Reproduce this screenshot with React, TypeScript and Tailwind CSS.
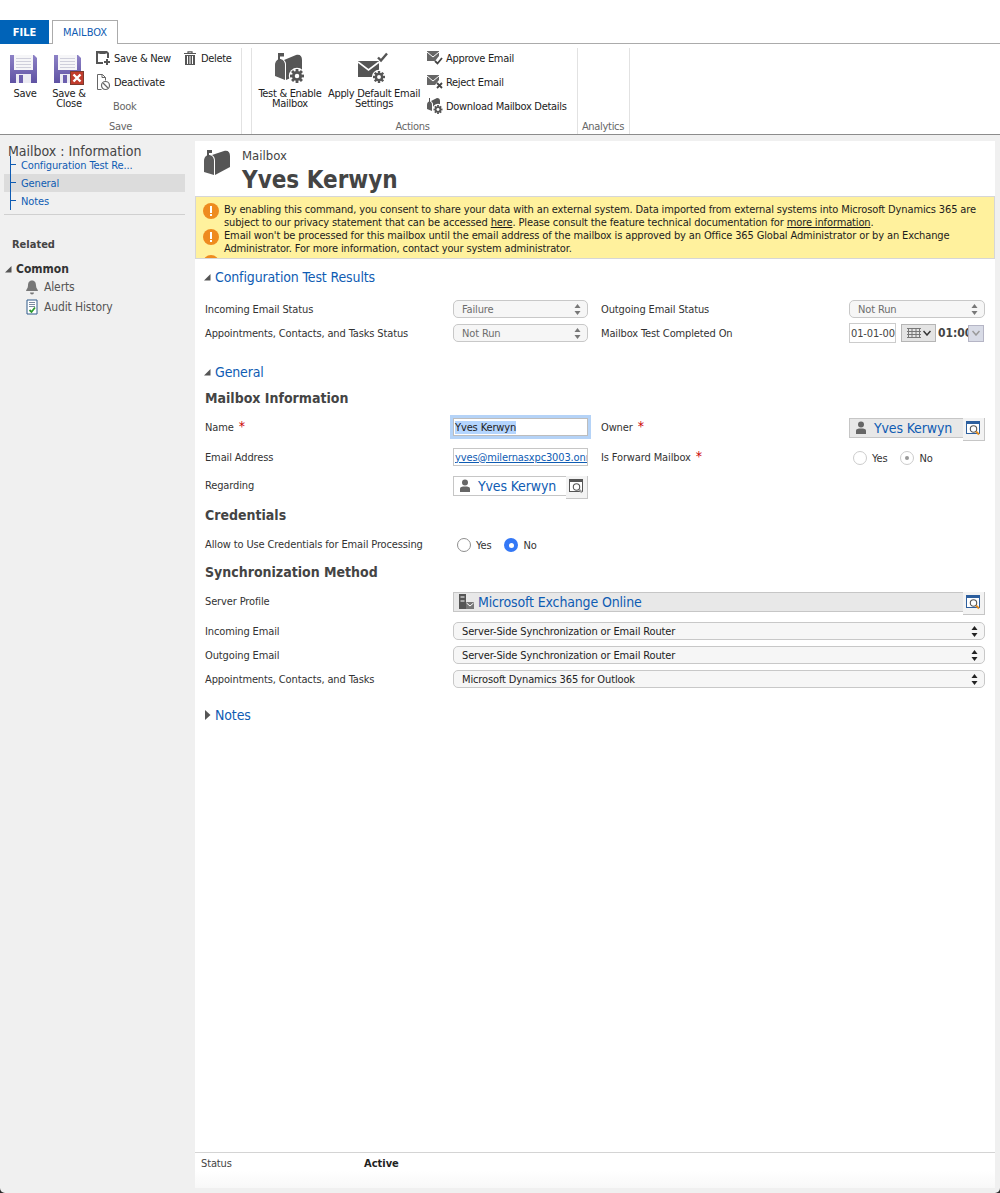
import React from "react";

const Gear = ({ x, y, r, fill = "#555", hole = "#fff", halo }: { x: number; y: number; r: number; fill?: string; hole?: string; halo?: boolean }) => (
  <g>
    {halo && <circle cx={x} cy={y} r={r + 1.2} fill="#fff" />}
    <circle cx={x} cy={y} r={r * 0.72} fill={fill} />
    {[0, 45, 90, 135, 180, 225, 270, 315].map((a) => (
      <rect key={a} x={x - r * 0.2} y={y - r} width={r * 0.4} height={r * 0.4} fill={fill} transform={`rotate(${a} ${x} ${y})`} />
    ))}
    <circle cx={x} cy={y} r={r * 0.32} fill={hole} />
  </g>
);

const Floppy = ({ close, id }: { close?: boolean; id: string }) => (
  <svg width="32" height="32" viewBox="0 0 32 32" className="block">
    <defs>
      <linearGradient id={id} x1="0" y1="0" x2="0" y2="1">
        <stop offset="0" stopColor="#8d82c6" />
        <stop offset="1" stopColor="#5f52a3" />
      </linearGradient>
    </defs>
    <path d="M1 1h24l3 3v25H1z" fill={`url(#${id})`} />
    <rect x="5" y="1" width="19" height="15" fill="#f6f6f8" />
    {[4, 7, 10, 13].map((y) => (
      <rect key={y} x="7" y={y} width="15" height="1" fill="#cfcfdb" />
    ))}
    <rect x="7" y="20" width="15" height="9" fill="#ecebf3" />
    <rect x="10" y="21" width="4" height="8" fill="#6c5fae" />
    {close && (
      <g>
        <rect x="17.500" y="17.500" width="13" height="13" fill="#c13b2c" stroke="#7d3a2e" />
        <path d="M20.500 20.500l7 7M27.500 20.500l-7 7" stroke="#fff" strokeWidth="2.400" />
      </g>
    )}
  </svg>
);

const MailboxShape = () => (
  <svg width="32" height="32" viewBox="0 0 32 32" className="block">
    <path d="M10 8l12-5c4-1 6 1 6 5v13l-16 7V12c0-2-1-3-2-4z" fill="#555" />
    <path d="M1 13c0-4 3-6 5-6s5 2 5 6v15l-10-4z" fill="#5c5c5c" />
    <rect x="4" y="2" width="2" height="7" fill="#555" />
    <rect x="4" y="1" width="6" height="3.500" fill="#555" />
    <Gear x={23} y={24} r={7} halo />
  </svg>
);

const MailboxLarge = () => (
  <svg width="28" height="28" viewBox="0 0 28 28" className="block">
    <path d="M8 5l12-4c4-1 6 1 6 5v11L11 25V11c0-3-1-5-3-6z" fill="#555" />
    <path d="M0 11c0-4 2.500-6 5-6s5 2 5 6v14l-10-3z" fill="#5c5c5c" />
    <rect x="3" y="1" width="2" height="6" fill="#555" />
    <rect x="3" y="0" width="5" height="3" fill="#555" />
  </svg>
);

const ApplyIcon = () => (
  <svg width="32" height="32" viewBox="0 0 32 32" className="block">
    <path d="M20 5.500l3 3 6-7" fill="none" stroke="#555" strokeWidth="2.400" />
    <path d="M0 9h21v10l-5 6H0z" fill="#555" />
    <path d="M0 10l10.500 8L21 10" fill="none" stroke="#fff" strokeWidth="1.600" />
    <Gear x={21} y={25} r={6} halo />
  </svg>
);

const Mail = ({ kind }: { kind: "check" | "x" }) => (
  <svg width="16" height="16" viewBox="0 0 16 16" className="block">
    <path d="M0 1h12v5l-4 5H0z" fill="#666" />
    <path d="M0 2l6 5 6-5" fill="none" stroke="#fff" strokeWidth="1" />
    {kind === "check" ? (
      <path d="M8 11l2.500 2.500L15 8" fill="none" stroke="#444" strokeWidth="1.800" />
    ) : (
      <path d="M10 9l5 5M15 9l-5 5" stroke="#444" strokeWidth="1.800" />
    )}
  </svg>
);

const DownloadIcon = () => (
  <svg width="16" height="16" viewBox="0 0 16 16" className="block">
    <path d="M4 3l6-3c2 0 3 1 3 3v4l-7 6V6c0-1-1-2-2-3z" fill="#555" />
    <path d="M0 7c0-2 1-3.500 2.500-3.500S5 5 5 7v6l-5-2z" fill="#5c5c5c" />
    <rect x="2" y="0" width="1" height="4" fill="#555" />
    <Gear x={11} y={11.500} r={4.500} halo />
  </svg>
);

const SaveNewIcon = () => (
  <svg width="16" height="16" viewBox="0 0 16 16" className="block">
    <path d="M1 1h11l2 2v5h-2V3.500H3V12h5v2H1z" fill="#555" />
    <rect x="4.500" y="1" width="6" height="3" fill="#555" />
    <path d="M12 9v6M9 12h6" stroke="#555" strokeWidth="2" />
  </svg>
);

const DeactivateIcon = () => (
  <svg width="16" height="18" viewBox="0 0 16 18" className="block">
    <path d="M2.500 13V1.500h5l3 3v3M7 1.500v3h3.500M2.500 13v3.500h4" fill="none" stroke="#666" />
    <circle cx="10.500" cy="12.500" r="4" fill="#fff" stroke="#666" strokeWidth="1.200" />
    <path d="M8 10l5 5" stroke="#666" strokeWidth="1.200" />
  </svg>
);

const TrashIcon = () => (
  <svg width="14" height="14" viewBox="0 0 14 14" className="block">
    <path d="M1 2.500h12M5 2V.8h4V2" fill="none" stroke="#555" strokeWidth="1.200" />
    <path d="M2 4h10v10H2z" fill="#555" />
    <path d="M4.500 5v8M7 5v8M9.500 5v8" stroke="#fff" />
  </svg>
);

const BellIcon = () => (
  <svg width="16" height="16" viewBox="0 0 16 16" className="block">
    <path d="M8 1.500c3 0 4 2.500 4 5 0 3 2 4 2 5.500H2c0-1.500 2-2.500 2-5.500 0-2.500 1-5 4-5z" fill="#777" />
    <path d="M6 13.500h4a2 2 0 01-4 0z" fill="#777" />
  </svg>
);

const AuditIcon = () => (
  <svg width="16" height="16" viewBox="0 0 16 16" className="block">
    <path d="M3 1h10v14H3z" fill="#fff" stroke="#2f5a8a" />
    <path d="M5 3.500h6M5 5.500h6M5 7.500h6" stroke="#7b8ba0" />
    <path d="M5.500 11l2 2 3.500-4.500" fill="none" stroke="#2d9a2d" strokeWidth="1.800" />
  </svg>
);

const Warn = () => (
  <div className="w-4 h-4 rounded-full bg-[#ee8b1f] flex items-center justify-center shrink-0">
    <div className="flex flex-col items-center gap-[1px]">
      <div className="w-[2px] h-[7px] bg-white" />
      <div className="w-[2px] h-[2px] bg-white" />
    </div>
  </div>
);

const PersonIcon = () => (
  <svg width="12" height="14" viewBox="0 0 12 14" className="block">
    <circle cx="6" cy="3.500" r="3" fill="#666" />
    <path d="M1 13V9.500c0-1.500 2-2 5-2s5 .5 5 2V13z" fill="#666" />
  </svg>
);

const LookupIcon = ({ color = "#555", dot = "#999" }: { color?: string; dot?: string }) => (
  <svg width="16" height="16" viewBox="0 0 16 16" className="block">
    <rect x="0.500" y="0.500" width="13" height="12" fill="#fff" stroke={color} />
    <rect x="0.500" y="0.500" width="13" height="2.500" fill={color} />
    <circle cx="7.500" cy="8" r="3.200" fill="none" stroke="#555" strokeWidth="1.100" />
    <path d="M10 10.500l3 3" stroke={dot} strokeWidth="2" />
  </svg>
);

const UpDown = ({ dark }: { dark?: boolean }) => (
  <svg width="7" height="11" viewBox="0 0 7 11" className="block">
    <path d="M3.500 0L6.500 4H.5zM3.500 11L.5 7h6z" fill={dark ? "#222" : "#777"} />
  </svg>
);

const Caret = ({ open }: { open?: boolean }) => (
  <span className="w-2 flex justify-center shrink-0">
    {open ? (
      <svg width="8" height="8" viewBox="0 0 8 8" className="block">
        <path d="M7.500 1v6.500H1z" fill="#555" />
      </svg>
    ) : (
      <svg width="7" height="10" viewBox="0 0 7 10" className="block">
        <path d="M1 0l5.500 5L1 10z" fill="#555" />
      </svg>
    )}
  </span>
);

const SelectBox = ({ value, disabled, className }: { value: string; disabled?: boolean; className?: string }) => (
  <div
    className={`h-[18px] border border-[#c8c8c8] rounded-[5px] flex items-center justify-between pl-2 pr-[6px] bg-[#f6f6f6] ${
      disabled ? "text-[#6d6d6d]" : "text-[#222]"
    } ${className ?? ""}`}
  >
    <span>{value}</span>
    <UpDown dark={!disabled} />
  </div>
);

const Label = ({ children, req }: { children: React.ReactNode; req?: boolean }) => (
  <div className="flex items-center text-[#333]">
    <span>{children}</span>
    {req && <span className="ml-[5px] text-[#c00] text-[14px] leading-none -mt-[2px]">*</span>}
  </div>
);

const SectionTitle = ({ children, open, className }: { children: string; open?: boolean; className?: string }) => (
  <div className={`h-5 -ml-[2px] flex items-center gap-[4px] ${className ?? ""}`}>
    <Caret open={open} />
    <span className="text-[14px] text-[#0f5cb3]">{children}</span>
  </div>
);

const SubTitle = ({ children, className }: { children: string; className?: string }) => (
  <div className={`h-5 flex items-center text-[14px] font-bold text-[#444] tracking-normal ${className ?? ""}`}>{children}</div>
);

const Lookup = ({ name, locked, wide }: { name: string; locked?: boolean; wide?: boolean }) => (
  <div className="flex h-5 items-stretch relative mt-[2px] tracking-[-0.15px]">
    <div className={`flex-1 flex items-center border border-[#c6c6c6] pl-[5px] h-5 ${wide ? "gap-[3px] pl-[3px]" : "gap-[7px]"} ${locked ? "bg-[#e8e8e8]" : "bg-white"}`}>
      {wide ? (
        <svg width="16" height="17" viewBox="0 0 16 17" className="block shrink-0">
          <rect x="0" y="0" width="7" height="15" fill="#555" />
          <path d="M1.500 3h4M1.500 7h4" stroke="#fff" />
          <rect x="7" y="8" width="8" height="7" fill="#777" />
          <path d="M7.500 9l3.500 3 3.500-3" fill="none" stroke="#fff" />
        </svg>
      ) : (
        <PersonIcon />
      )}
      <span className="text-[14px] text-[#0f5cb3]">{name}</span>
    </div>
    <div className="absolute right-0 top-0 w-[22px] h-[23px] bg-[#f3f3f3] border-b border-r border-[#c6c6c6] flex items-center justify-center">
      <LookupIcon color={locked ? "#2d5f9e" : "#555"} dot={locked ? "#e08a1e" : "#999"} />
    </div>
  </div>
);

const Radio = ({ checked, disabled }: { checked?: boolean; disabled?: boolean }) =>
  checked && !disabled ? (
    <span className="w-[14px] h-[14px] rounded-full bg-[#3478f6] flex items-center justify-center">
      <span className="w-[5px] h-[5px] rounded-full bg-white" />
    </span>
  ) : (
    <span className={`w-[14px] h-[14px] rounded-full bg-white border flex items-center justify-center ${disabled ? "border-[#ccc]" : "border-[#8f8f8f]"}`}>
      {checked && <span className="w-[4px] h-[4px] rounded-full bg-[#999]" />}
    </span>
  );

const RadioPair = ({ disabled }: { disabled?: boolean }) => (
  <div className="flex items-center text-[#333] mt-[2px]">
    <Radio disabled={disabled} />
    <span className="ml-[5px] mr-[13px]">Yes</span>
    <Radio checked disabled={disabled} />
    <span className="ml-[5px]">No</span>
  </div>
);

const RibbonItem = ({ icon, label }: { icon: React.ReactNode; label: string }) => (
  <div className="h-6 flex items-center gap-[3px] whitespace-nowrap">
    <span className="w-4 flex justify-center">{icon}</span>
    <span>{label}</span>
  </div>
);

const BigButton = ({ icon, lines, className, textClass }: { icon: React.ReactNode; lines: string[]; className?: string; textClass?: string }) => (
  <div className={`flex flex-col items-center ${className ?? ""}`}>
    <div className="h-[32px] flex items-center justify-center">{icon}</div>
    <div className={`text-center leading-[10px] whitespace-nowrap ${textClass ?? "mt-[3px]"}`}>
      {lines.map((l) => (
        <div key={l}>{l}</div>
      ))}
    </div>
  </div>
);

const GroupLabel = ({ children, className }: { children: string; className?: string }) => (
  <div className={`h-[16px] text-center text-[#666] leading-[18px] ${className ?? ""}`}>{children}</div>
);

const Sep = () => <div className="w-px bg-[#e2e2e2]" />;

const formRow = "grid grid-cols-[248px_135px_13px_248px_136px] items-center h-6";
const wideRow = "grid grid-cols-[248px_532px] items-center h-6";

export default function App() {
  return (
    <div className="w-[1000px] h-[1193px] bg-[#2a2a2a] overflow-hidden">
      <div className="w-[1000px] h-[1193px] bg-[#f0f0f0] rounded-b-[5px] overflow-hidden flex flex-col text-[11px] leading-[13px] text-[#222] tracking-[-0.13px] [font-family:'DejaVu_Sans_Condensed','DejaVu_Sans',sans-serif]">
        {/* Tabs */}
        <div className="h-[44px] bg-white flex items-end border-b border-[#ababab] shrink-0 tracking-normal">
          <div className="w-[49px] h-[24px] bg-[#0063b8] text-white flex items-center justify-center font-bold -mb-px">FILE</div>
          <div className="ml-[3px] w-[66px] h-[24px] bg-white border border-b-0 border-[#ababab] text-[#0f5cb3] flex items-center justify-center -mb-px">MAILBOX</div>
        </div>
        {/* Ribbon */}
        <div className="h-[91px] bg-white border-b border-[#8c8c8c] flex shrink-0 pt-[4px] tracking-[-0.3px]">
          <div className="w-[241px] flex flex-col">
            <div className="flex-1 flex">
              <BigButton className="w-[50px] pt-[6px]" icon={<Floppy id="fa" />} lines={["Save"]} />
              <BigButton className="w-[38px] pt-[6px]" icon={<Floppy close id="fb" />} lines={["Save &", "Close"]} />
              <div className="ml-[7px] flex flex-col">
                <div className="flex h-[24px] -mt-[2px]">
                  <RibbonItem icon={<SaveNewIcon />} label="Save & New" />
                  <div className="ml-[11px]">
                    <RibbonItem icon={<TrashIcon />} label="Delete" />
                  </div>
                </div>
                <RibbonItem icon={<DeactivateIcon />} label="Deactivate" />
                <div className="h-6 flex items-center pl-[18px] text-[#666]">Book</div>
              </div>
            </div>
            <GroupLabel>Save</GroupLabel>
          </div>
          <Sep />
          <div className="w-[9px]" />
          <Sep />
          <div className="w-[325px] flex flex-col">
            <div className="flex-1 flex">
              <BigButton className="w-[76px] pt-[4px]" textClass="mt-[5px]" icon={<MailboxShape />} lines={["Test & Enable", "Mailbox"]} />
              <BigButton className="w-[92px] pt-[4px]" textClass="mt-[5px]" icon={<ApplyIcon />} lines={["Apply Default Email", "Settings"]} />
              <div className="ml-[7px] flex flex-col -mt-[2px]">
                <RibbonItem icon={<Mail kind="check" />} label="Approve Email" />
                <RibbonItem icon={<Mail kind="x" />} label="Reject Email" />
                <RibbonItem icon={<DownloadIcon />} label="Download Mailbox Details" />
              </div>
            </div>
            <GroupLabel className="pr-[4px]">Actions</GroupLabel>
          </div>
          <Sep />
          <div className="w-[51px] flex flex-col">
            <div className="flex-1" />
            <GroupLabel className="pr-[1px]">Analytics</GroupLabel>
          </div>
          <Sep />
        </div>

        <div className="flex-1 flex min-h-0 pt-[6px] pb-[5px]">
          {/* Left nav */}
          <div className="w-[195px] shrink-0 pl-1">
            <div className="pl-1 text-[14px] leading-[16px] text-[#444] h-[16px] mt-[2px] tracking-normal">Mailbox : Information</div>
            <div className="w-[181px] pb-[4px] border-b border-[#d0d0d0] mt-[-3px]">
              {["Configuration Test Re...", "General", "Notes"].map((t, i) => (
                <div key={t} className={`h-[18px] flex items-center ${i === 1 ? "bg-[#dcdcdc]" : ""}`}>
                  <div className={`ml-[6px] w-[6px] h-[18px] border-l border-[#0f5cb3] relative ${i === 2 ? "h-[9px] self-start" : ""}`}>
                    <div className="border-b border-[#0f5cb3] w-[5px] h-[9px]" />
                  </div>
                  <span className="ml-[5px] text-[#0f5cb3]">{t}</span>
                </div>
              ))}
            </div>
            <div className="mt-[23px] pl-2 font-bold text-[#444] h-[14px] tracking-normal">Related</div>
            <div className="mt-[10px] flex items-center gap-[4px] h-[14px] font-bold text-[12px] text-[#333] tracking-normal">
              <Caret open />
              <span>Common</span>
            </div>
            <div className="mt-[1px] pl-[20px] text-[12px] text-[#555]">
              <div className="h-[20px] flex items-center gap-[4px]"><BellIcon /><span>Alerts</span></div>
              <div className="h-[20px] flex items-center gap-[4px]"><AuditIcon /><span>Audit History</span></div>
            </div>
          </div>

          {/* Main */}
          <div className="w-[800px] bg-white flex flex-col">
            <div className="h-[55px] flex shrink-0">
              <div className="ml-[9px] mt-[9px]"><MailboxLarge /></div>
              <div className="ml-[10px] tracking-normal">
                <div className="mt-[8px] text-[13px] leading-[14px] text-[#444]">Mailbox</div>
                <div className="mt-[3px] text-[24px] leading-[28px] font-bold text-[#444]">Yves Kerwyn</div>
              </div>
            </div>
            <div className="h-[63px] shrink-0 overflow-hidden bg-[#fff19d] border border-[#d6d6d6] pt-[6px] pl-[7px] pr-[14px] text-[#1c1c1c]">
              <div className="flex gap-[5px]">
                <Warn />
                <div>
                  By enabling this command, you consent to share your data with an external system. Data imported from external systems into Microsoft Dynamics 365 are subject to our privacy statement that can be accessed <span className="underline">here</span>. Please consult the feature technical documentation for <span className="underline">more information</span>.
                </div>
              </div>
              <div className="flex gap-[5px]">
                <Warn />
                <div>
                  Email won't be processed for this mailbox until the email address of the mailbox is approved by an Office 365 Global Administrator or by an Exchange Administrator. For more information, contact your system administrator.
                </div>
              </div>
              <div className="flex gap-[5px]">
                <Warn />
                <div className="pt-[1px]">This mailbox is not enabled for server-side synchronization of appointments, contacts, tasks.</div>
              </div>
            </div>

            <div className="pl-[10px] pr-[10px] flex-1">
              <SectionTitle open className="mt-2">Configuration Test Results</SectionTitle>
              <div className="mt-[10px]">
                <div className={formRow}>
                  <Label>Incoming Email Status</Label>
                  <SelectBox value="Failure" disabled />
                  <div />
                  <Label>Outgoing Email Status</Label>
                  <SelectBox value="Not Run" disabled />
                </div>
                <div className={formRow}>
                  <Label>Appointments, Contacts, and Tasks Status</Label>
                  <SelectBox value="Not Run" disabled />
                  <div />
                  <Label>Mailbox Test Completed On</Label>
                  <div className="flex items-center h-5">
                    <div className="w-[47px] h-5 border border-[#ccc] flex items-center pl-px text-[#444] shrink-0 whitespace-nowrap overflow-hidden">01-01-00</div>
                    <div className="ml-[5px] w-[35px] h-[18px] bg-[#e4e4e4] border border-[#b5b5b5] flex items-center justify-center gap-[2px] shrink-0">
                      <svg width="14" height="10" viewBox="0 0 14 10" className="block">
                        <path d="M0 .5h14M0 3.500h14M0 6.500h14M0 9.500h14M1.500 0v10M5 0v10M9 0v10M12.500 0v10" stroke="#777" />
                      </svg>
                      <svg width="8" height="6" viewBox="0 0 8 6" className="block">
                        <path d="M.5 1L4 5l3.500-4" fill="none" stroke="#333" strokeWidth="1.500" />
                      </svg>
                    </div>
                    <div className="ml-[2px] w-[31px] h-5 overflow-hidden bg-white font-bold text-[12px] tracking-normal text-[#444] flex items-center whitespace-nowrap shrink-0">01:00</div>
                    <div className="-ml-[1px] w-[16px] h-[17px] bg-[#d8dbe6] border border-[#b5b5c5] flex items-center justify-center shrink-0">
                      <svg width="8" height="6" viewBox="0 0 8 6" className="block">
                        <path d="M.5 1L4 5l3.500-4" fill="none" stroke="#999" strokeWidth="1.500" />
                      </svg>
                    </div>
                  </div>
                </div>
              </div>

              <SectionTitle open className="mt-[17px]">General</SectionTitle>
              <SubTitle className="mt-[6px]">Mailbox Information</SubTitle>
              <div className="mt-[7px]">
                <div className={formRow}>
                  <Label req>Name</Label>
                  <div className="h-[18px] border border-[#bdbdbd] outline outline-[3px] outline-[#b5d3f7] flex items-center pl-[1px] text-[#222]">
                    <span className="bg-[#b4d5fe]">Yves Kerwyn</span>
                  </div>
                  <div />
                  <Label req>Owner</Label>
                  <Lookup name="Yves Kerwyn" locked />
                </div>
                <div className={`${formRow} mt-[6px]`}>
                  <Label>Email Address</Label>
                  <div className="h-[18px] border border-[#c6c6c6] flex items-center pl-[1px] overflow-hidden whitespace-nowrap text-[#0f5cb3] underline">yves@milernasxpc3003.onmicrosoft.com</div>
                  <div />
                  <Label req>Is Forward Mailbox</Label>
                  <div className="pl-[4px]"><RadioPair disabled /></div>
                </div>
                <div className={`${formRow} mt-[4px]`}>
                  <Label>Regarding</Label>
                  <Lookup name="Yves Kerwyn" />
                </div>
              </div>

              <SubTitle className="mt-2">Credentials</SubTitle>
              <div className={`${formRow} mt-[7px]`}>
                <Label>Allow to Use Credentials for Email Processing</Label>
                <div className="pl-[4px]"><RadioPair /></div>
              </div>
              <SubTitle className="mt-[6px]">Synchronization Method</SubTitle>
              <div className={`${wideRow} mt-[7px]`}>
                <Label>Server Profile</Label>
                <Lookup name="Microsoft Exchange Online" locked wide />
              </div>
              <div className="mt-[6px]">
                <div className={wideRow}>
                  <Label>Incoming Email</Label>
                  <SelectBox value="Server-Side Synchronization or Email Router" />
                </div>
                <div className={wideRow}>
                  <Label>Outgoing Email</Label>
                  <SelectBox value="Server-Side Synchronization or Email Router" />
                </div>
                <div className={wideRow}>
                  <Label>Appointments, Contacts, and Tasks</Label>
                  <SelectBox value="Microsoft Dynamics 365 for Outlook" />
                </div>
              </div>
              <SectionTitle className="mt-[14px]">Notes</SectionTitle>
            </div>

            <div className="h-[36px] shrink-0 border-t border-[#d4d4d4] flex pt-[4px] pl-[6px] bg-gradient-to-b from-white from-50% to-[#f8f8f8]">
              <span className="w-[163px] text-[#444]">Status</span>
              <span className="font-bold text-[#222] tracking-normal">Active</span>
            </div>
          </div>
        </div>
      </div>
    </div>
  );
}
